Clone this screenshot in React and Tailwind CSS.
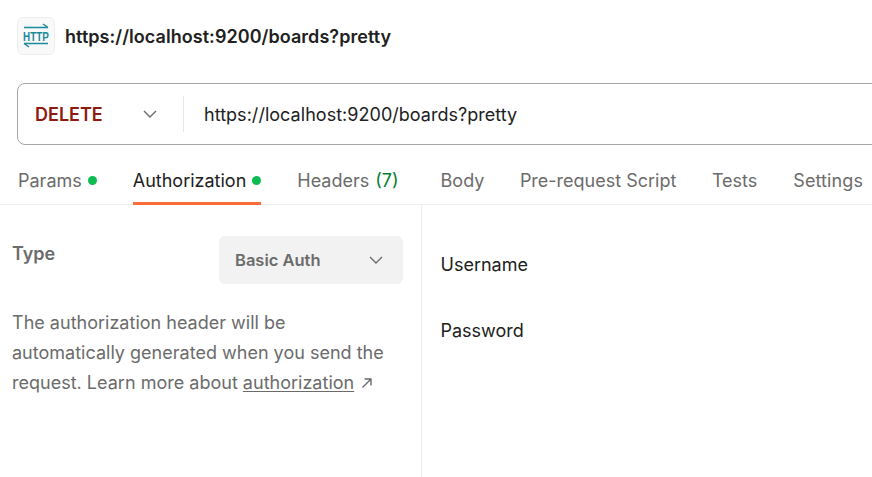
import React from "react";

const Chevron = ({ className }) => (
  <svg className={className} width="16" height="16" viewBox="0 0 16 16" fill="none" stroke="#6b6b6b" strokeWidth="1.4">
    <path d="M2 5 L8 11 L14 5" />
  </svg>
);

const Dot = () => <span className="ml-[6px] inline-block h-[9px] w-[9px] rounded-full bg-[#0cbb52]" />;

function Tab({ children, active, className = "" }) {
  return (
    <div className={`relative flex h-[60px] shrink-0 items-center whitespace-nowrap pt-[10px] ${active ? "text-[#212121]" : "text-[#6b6b6b]"} ${className}`}>
      {children}
      {active && <span className="absolute bottom-0 left-0 right-0 h-[3px] bg-[#ff6c37]" />}
    </div>
  );
}

export default function App() {
  return (
    <div className="flex h-[477px] w-[872px] flex-col overflow-hidden bg-white text-[18px] font-['Inter',sans-serif]">
      <div className="flex h-[83px] shrink-0 items-start pl-[17px] pt-[17px]">
        <div className="relative flex h-[38px] w-[38px] items-center justify-center rounded-[6px] border border-[#ededed] bg-[#f9f9f9]">
          <svg className="absolute left-[5px] top-[5px]" width="26" height="26" viewBox="0 0 26 26" fill="none" stroke="#1b8a9c" strokeWidth="1.5">
            <path d="M1 4.5 H25 M20 1 L25 4.5" />
            <path d="M1 20.5 H25 M1 20.5 L6 24" />
          </svg>
          <span className="scale-x-[0.76] font-['Liberation_Sans',sans-serif] text-[13px] font-bold leading-none text-[#1b8a9c]">HTTP</span>
        </div>
        <div className="ml-[10px] flex h-[38px] items-center whitespace-nowrap font-semibold tracking-[0.05px] text-[#212121]">
          https://localhost:9200/boards?pretty
        </div>
      </div>

      <div className="ml-[17px] flex h-[62px] w-[900px] shrink-0 items-center rounded-[8px] border border-[#a6a6a6]">
        <div className="ml-[17px] w-[107px] font-semibold text-[#8e1a10]">DELETE</div>
        <Chevron />
        <div className="ml-[25px] h-[36px] w-px bg-[#e6e6e6]" />
        <div className="ml-[20px] whitespace-nowrap tracking-[0.03px] text-[#212121]">https://localhost:9200/boards?pretty</div>
      </div>

      <div className="flex h-[60px] shrink-0 gap-[36px] border-b border-[#ededed] pl-[18px]">
        <Tab>Params<Dot /></Tab>
        <Tab active>Authorization<Dot /></Tab>
        <Tab className="mr-[6px]">Headers<span className="ml-[6px] text-[#007f31]">(7)</span></Tab>
        <Tab>Body</Tab>
        <Tab className="-ml-[0.5px]">Pre-request Script</Tab>
        <Tab className="-ml-[0.5px]">Tests</Tab>
        <Tab className="tracking-[0.1px]">Settings</Tab>
      </div>

      <div className="flex min-h-0 flex-1">
        <div className="w-[422px] shrink-0 border-r border-[#ededed] pl-[12px] pr-[18px] pt-[31px]">
          <div className="flex items-start justify-between">
            <div className="pt-[4px] font-semibold leading-[27px] text-[#6b6b6b]">Type</div>
            <div className="flex h-[48px] w-[184px] items-center justify-between rounded-[6px] bg-[#f2f2f2] pl-[16px] pr-[19px] text-[#6b6b6b]">
              <span className="text-[16.5px] font-semibold">Basic Auth</span>
              <Chevron />
            </div>
          </div>
          <p className="mt-[24px] w-[385px] leading-[30px] tracking-[0.01px] text-[#6b6b6b]">
            The authorization header will be automatically generated when you send the request. Learn more about{" "}
            <span className="underline underline-offset-[2px]">authorization</span>
            <svg className="ml-[7px] inline-block align-[0px]" width="12" height="12" viewBox="0 0 12 12" fill="none" stroke="#6b6b6b" strokeWidth="1.4">
              <path d="M1.5 10.5 L10 2 M3.5 2 H10 V8.5" />
            </svg>
          </p>
        </div>
        <div className="flex flex-col pl-[18.5px] pt-[46px] text-[#212121]">
          <div className="h-[66px] leading-[27px]">Username</div>
          <div className="leading-[27px]">Password</div>
        </div>
      </div>
    </div>
  );
}
